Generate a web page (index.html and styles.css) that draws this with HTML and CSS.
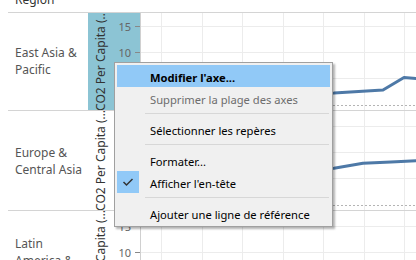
FILE: index.html
```html
<!DOCTYPE html>
<html lang="fr">
<head>
    <meta charset="utf-8">
    <title>CO2 par région</title>
    <link rel="stylesheet" href="styles.css">
</head>
<body>
<div class="view">
    <div class="header"><span class="header-title">Region</span></div>
    <div class="rows">
        <div class="rows-inner">
            <div class="row">
                <div class="label">East Asia &amp;<br>Pacific</div>
                <div class="axis axis-selected">
                    <div class="axis-title"><span>CO2 Per Capita (…</span></div>
                    <div class="ticks">
                        <div class="tick">15</div>
                        <div class="tick">10</div>
                        <div class="tick">5</div>
                        <div class="tick">0</div>
                    </div>
                </div>
                <div class="plot">
                    <svg width="276" height="99" viewBox="0 0 276 99">
                        <g class="grid">
                            <line x1="20.5" y1="0" x2="20.5" y2="99"/>
                            <line x1="61.5" y1="0" x2="61.5" y2="99"/>
                            <line x1="101.5" y1="0" x2="101.5" y2="99"/>
                            <line x1="142.5" y1="0" x2="142.5" y2="99"/>
                            <line x1="182.5" y1="0" x2="182.5" y2="99"/>
                            <line x1="223.5" y1="0" x2="223.5" y2="99"/>
                            <line x1="263.5" y1="0" x2="263.5" y2="99"/>
                            <line x1="0" y1="15.5" x2="276" y2="15.5"/>
                            <line x1="0" y1="41.5" x2="276" y2="41.5"/>
                            <line x1="0" y1="67.5" x2="276" y2="67.5"/>
                        </g>
                        <line class="zero" x1="0" y1="94.5" x2="276" y2="94.5"/>
                        <polyline class="series" points="0,86 60,85 120,84 193,82 242,79 263,66.5 276,67.5"/>
                    </svg>
                </div>
            </div>
            <div class="row">
                <div class="label">Europe &amp;<br>Central Asia</div>
                <div class="axis">
                    <div class="axis-title"><span>CO2 Per Capita (…</span></div>
                    <div class="ticks">
                        <div class="tick">15</div>
                        <div class="tick">10</div>
                        <div class="tick">5</div>
                        <div class="tick">0</div>
                    </div>
                </div>
                <div class="plot">
                    <svg width="276" height="99" viewBox="0 0 276 99">
                        <g class="grid">
                            <line x1="20.5" y1="0" x2="20.5" y2="99"/>
                            <line x1="61.5" y1="0" x2="61.5" y2="99"/>
                            <line x1="101.5" y1="0" x2="101.5" y2="99"/>
                            <line x1="142.5" y1="0" x2="142.5" y2="99"/>
                            <line x1="182.5" y1="0" x2="182.5" y2="99"/>
                            <line x1="223.5" y1="0" x2="223.5" y2="99"/>
                            <line x1="263.5" y1="0" x2="263.5" y2="99"/>
                            <line x1="0" y1="15.5" x2="276" y2="15.5"/>
                            <line x1="0" y1="41.5" x2="276" y2="41.5"/>
                            <line x1="0" y1="67.5" x2="276" y2="67.5"/>
                        </g>
                        <line class="zero" x1="0" y1="94.5" x2="276" y2="94.5"/>
                        <polyline class="series" points="0,63 80,61 150,59 193,57.3 222,52.3 250,51 276,49.7"/>
                    </svg>
                </div>
            </div>
            <div class="row">
                <div class="label">Latin<br>America &amp;<br>Caribbean</div>
                <div class="axis">
                    <div class="axis-title"><span>CO2 Per Capita (…</span></div>
                    <div class="ticks">
                        <div class="tick">15</div>
                        <div class="tick">10</div>
                        <div class="tick">5</div>
                        <div class="tick">0</div>
                    </div>
                </div>
                <div class="plot">
                    <svg width="276" height="99" viewBox="0 0 276 99">
                        <g class="grid">
                            <line x1="20.5" y1="0" x2="20.5" y2="99"/>
                            <line x1="61.5" y1="0" x2="61.5" y2="99"/>
                            <line x1="101.5" y1="0" x2="101.5" y2="99"/>
                            <line x1="142.5" y1="0" x2="142.5" y2="99"/>
                            <line x1="182.5" y1="0" x2="182.5" y2="99"/>
                            <line x1="223.5" y1="0" x2="223.5" y2="99"/>
                            <line x1="263.5" y1="0" x2="263.5" y2="99"/>
                            <line x1="0" y1="15.5" x2="276" y2="15.5"/>
                            <line x1="0" y1="41.5" x2="276" y2="41.5"/>
                            <line x1="0" y1="67.5" x2="276" y2="67.5"/>
                        </g>
                        <line class="zero" x1="0" y1="94.5" x2="276" y2="94.5"/>
                        <polyline class="series" points="0,84 100,83 200,82 276,80"/>
                    </svg>
                </div>
            </div>
        </div>
    </div>

    <div class="menu">
        <div class="menu-item menu-item-hover"><span class="menu-check"></span><b>Modifier l'axe...</b></div>
        <div class="menu-item menu-item-disabled"><span class="menu-check"></span>Supprimer la plage des axes</div>
        <div class="menu-sep"></div>
        <div class="menu-item"><span class="menu-check"></span>Sélectionner les repères</div>
        <div class="menu-sep"></div>
        <div class="menu-item"><span class="menu-check"></span>Formater...</div>
        <div class="menu-item">
            <span class="menu-check menu-check-on">
                <svg width="12" height="10" viewBox="0 0 12 10"><polyline points="1.5,5 4.5,8 10.5,2"/></svg>
            </span>Afficher l'en-tête
        </div>
        <div class="menu-sep"></div>
        <div class="menu-item"><span class="menu-check"></span>Ajouter une ligne de référence</div>
    </div>
</div>
</body>
</html>
```

FILE: styles.css
```css
* {
    box-sizing: border-box;
}

body {
    margin: 0;
    background-color: #ffffff;
    font-family: "Noto Sans", Arial, sans-serif;
    overflow: hidden;
}

.view {
    position: relative;
    width: 416px;
    height: 260px;
    overflow: hidden;
}

.header {
    height: 13px;
    margin-left: 8px;
    padding-left: 7px;
    border-bottom: 1px solid #d4d4d4;
    overflow: hidden;
}

.header-title {
    display: block;
    margin-top: -8px;
    font-size: 12px;
    line-height: 16px;
    color: #333333;
}

.rows {
    height: 247px;
    overflow: hidden;
}

.rows-inner {
    margin-top: -2px;
}

.row {
    display: grid;
    grid-template-columns: 80px 52px 276px;
    height: 100px;
    margin-left: 8px;
    border-bottom: 1px solid #d4d4d4;
    overflow: hidden;
}

.label {
    display: flex;
    align-items: center;
    padding-left: 7px;
    font-size: 12px;
    line-height: 17px;
    color: #555555;
}

.axis {
    display: flex;
    height: 99px;
}

.axis-selected {
    background-color: #8cc4d4;
}

.axis-title {
    width: 25px;
    display: flex;
    align-items: center;
    justify-content: center;
}

.axis-title span {
    writing-mode: vertical-rl;
    transform: rotate(180deg);
    font-size: 12px;
    line-height: 14px;
    color: #333333;
    white-space: nowrap;
}

.ticks {
    width: 27px;
    padding-top: 2px;
}

.tick {
    height: 26px;
    display: flex;
    align-items: center;
    justify-content: flex-end;
    font-size: 11px;
    color: #666666;
}

.tick::after {
    content: "";
    width: 5px;
    height: 1px;
    margin-left: 4px;
    background-color: #888888;
}

.plot {
    border-left: 1px solid #d0d0d0;
    height: 99px;
}

.plot svg {
    display: block;
}

.grid line {
    stroke: #ececec;
    stroke-width: 1;
}

.zero {
    stroke: #b4b4b4;
    stroke-width: 1;
    stroke-dasharray: 2 2;
}

.series {
    fill: none;
    stroke: #4e79a7;
    stroke-width: 3;
    stroke-linejoin: round;
}

/* context menu */
.menu {
    position: absolute;
    left: 114px;
    top: 62px;
    width: 219px;
    padding: 2px;
    background-color: #f0f0f0;
    border: 1px solid #a0a0a0;
    box-shadow: 2px 2px 2px rgba(0, 0, 0, 0.3);
    font-family: "Noto Sans", Arial, sans-serif;
    font-size: 11.2px;
    color: #000000;
}

.menu-item {
    display: flex;
    align-items: center;
    height: 22px;
    padding-top: 2px;
    white-space: nowrap;
}

.menu-item-hover {
    background-color: #91c9f7;
}

.menu-item-disabled {
    color: #6d6d6d;
}

.menu-check {
    width: 22px;
    height: 22px;
    margin-top: -2px;
    margin-right: 11px;
    display: flex;
    align-items: center;
    justify-content: center;
}

.menu-check-on {
    background-color: #91c9f7;
}

.menu-check svg polyline {
    fill: none;
    stroke: #333333;
    stroke-width: 1.5;
}

.menu-sep {
    height: 9px;
    margin-left: 28px;
    margin-right: 1px;
    padding-top: 4px;
}

.menu-sep::before {
    content: "";
    display: block;
    height: 1px;
    background-color: #d7d7d7;
}
```
